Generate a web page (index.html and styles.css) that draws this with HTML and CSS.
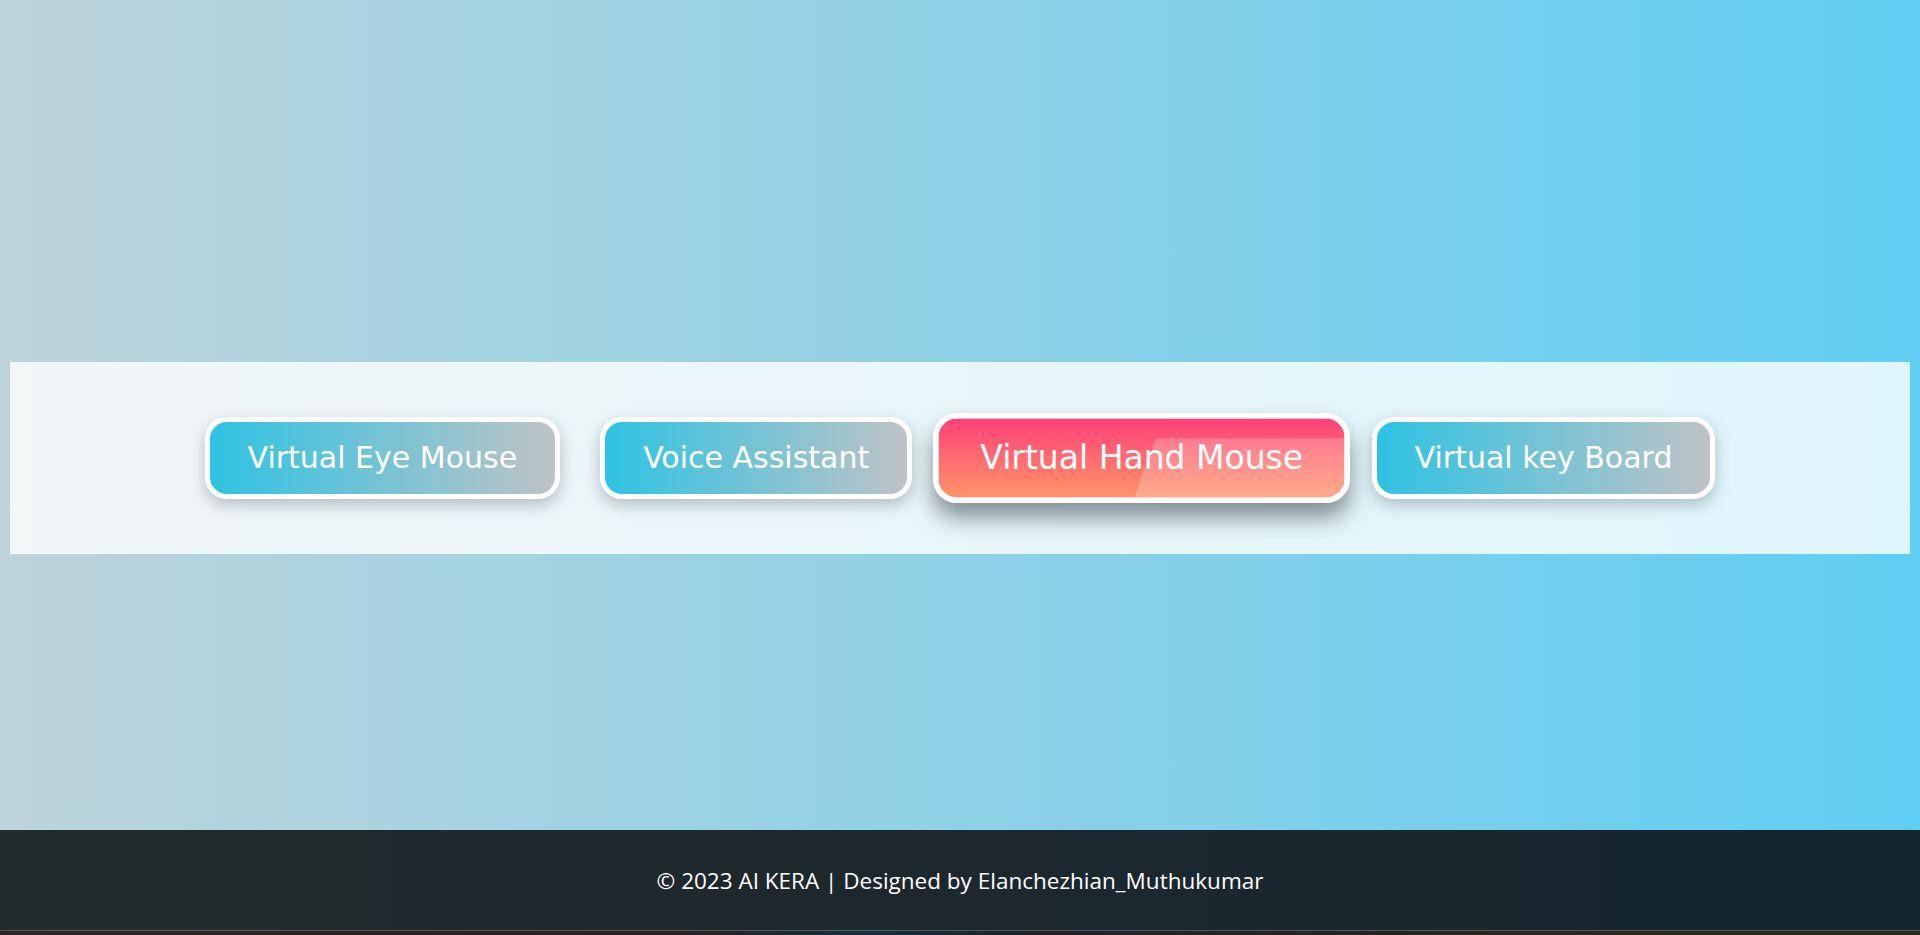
FILE: index.html
```html
<!DOCTYPE html>
<html lang="en">
<head>
<meta charset="utf-8">
<title>AI KERA</title>
<link rel="stylesheet" href="styles.css">
</head>
<body>
<main class="page">
  <section class="band">
    <nav class="menu">
      <a class="btn" href="#">Virtual Eye Mouse</a>
      <a class="btn" href="#">Voice Assistant</a>
      <a class="btn btn-active" href="#">Virtual Hand Mouse</a>
      <a class="btn" href="#">Virtual key Board</a>
    </nav>
  </section>
</main>
<footer class="footer">
  <p class="footer-text">© 2023 AI KERA | Designed by Elanchezhian_Muthukumar</p>
</footer>
<div class="strip"></div>
</body>
</html>
```
FILE: styles.css
```css
html, body {
  margin: 0;
  padding: 0;
  height: 100%;
  overflow: hidden;
}
body {
  font-family: "DejaVu Sans", sans-serif;
  display: flex;
  flex-direction: column;
}
.page {
  height: 830px;
  box-sizing: border-box;
  padding: 362px 10px 0;
  background: linear-gradient(to right, #bdd4da, #60cef3);
}
.band {
  height: 192px;
  background: rgba(255, 255, 255, 0.8);
  display: flex;
  align-items: center;
  justify-content: center;
}
.menu {
  display: flex;
  align-items: center;
  gap: 40px;
}
.btn {
  display: block;
  position: relative;
  overflow: hidden;
  padding: 0 38px;
  line-height: 72px;
  font-size: 30px;
  color: #fff;
  text-decoration: none;
  border: 5px solid #fff;
  border-radius: 22px;
  background: linear-gradient(to right, #2ec3e3, #bec3c6);
  box-shadow: 0 6px 16px rgba(40, 60, 70, 0.3);
  white-space: nowrap;
}
.btn-active {
  transform: scale(1.1);
  background: linear-gradient(to bottom, #ff4179, #ff9467);
  box-shadow: 0 13px 20px rgba(30, 40, 45, 0.5);
}
.btn-active::before {
  content: "";
  position: absolute;
  left: 48%;
  top: 18px;
  right: -40px;
  bottom: -2px;
  background: rgba(255, 255, 255, 0.22);
  transform: skewX(-20deg);
  transform-origin: bottom left;
}
.footer {
  height: 100px;
  background: linear-gradient(to right, #232a2c, #15262f);
  display: flex;
  align-items: center;
  justify-content: center;
}
.footer-text {
  margin: 0;
  color: #fff;
  font-family: "Open Sans", sans-serif;
  font-size: 22.5px;
}
.strip {
  height: 4px;
  border-top: 1px solid #575a5a;
  background: linear-gradient(to right, #2b2622, #2a2020 35%, #13303c 45%, #232226 55%, #2a2a1c 90%);
}
```
